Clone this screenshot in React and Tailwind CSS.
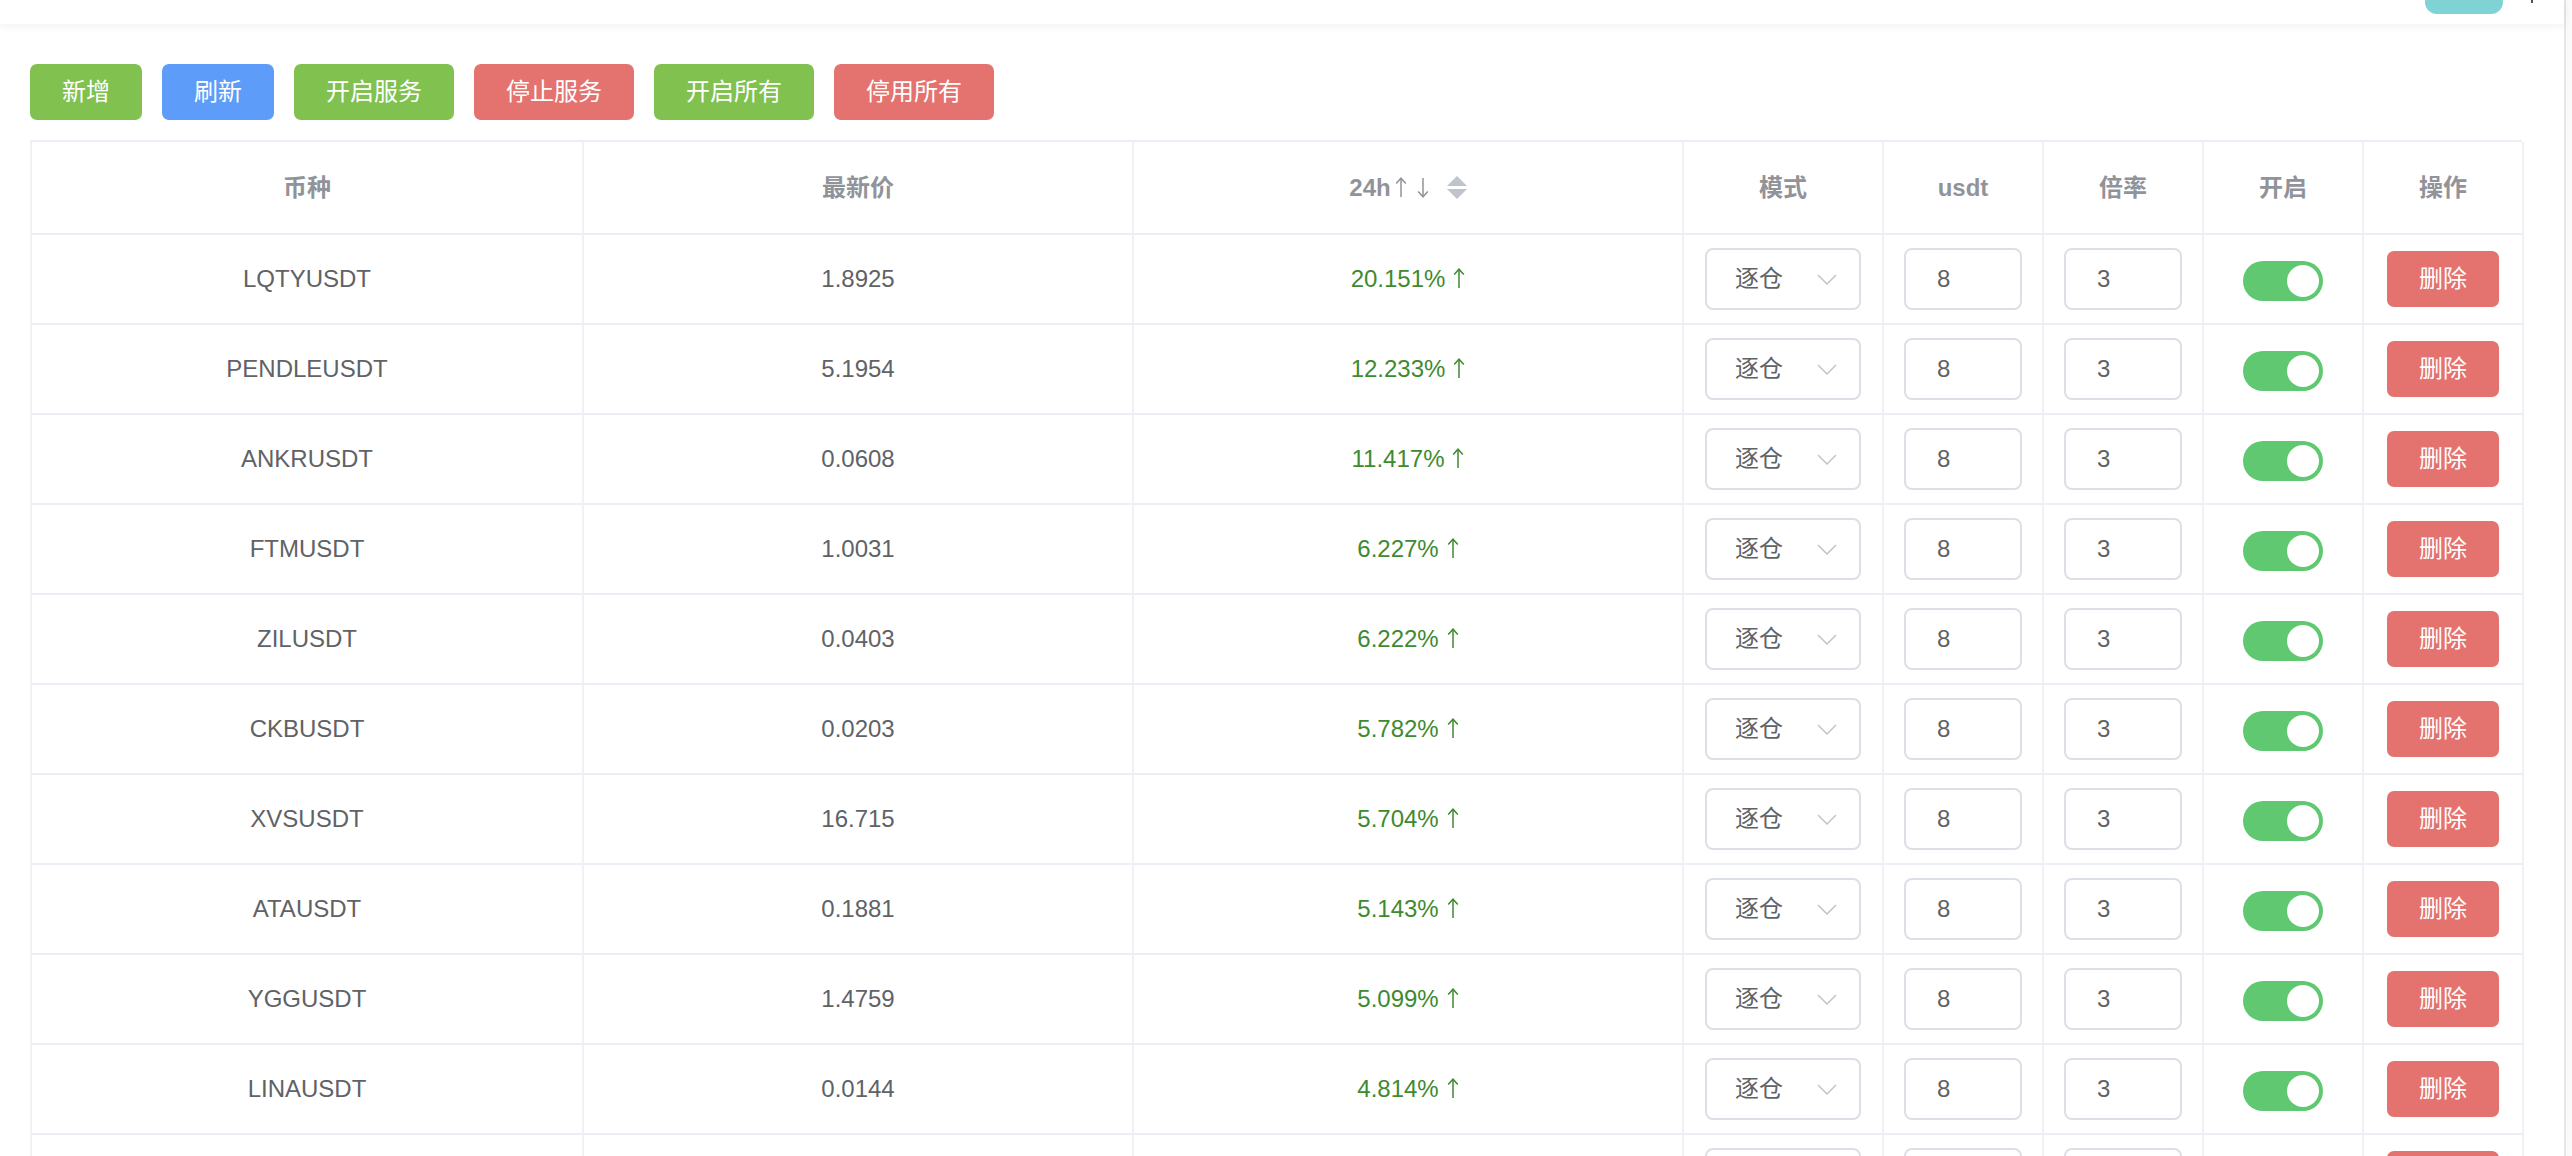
import React from "react";

const rows = [
  ["LQTYUSDT", "1.8925", "20.151%"],
  ["PENDLEUSDT", "5.1954", "12.233%"],
  ["ANKRUSDT", "0.0608", "11.417%"],
  ["FTMUSDT", "1.0031", "6.227%"],
  ["ZILUSDT", "0.0403", "6.222%"],
  ["CKBUSDT", "0.0203", "5.782%"],
  ["XVSUSDT", "16.715", "5.704%"],
  ["ATAUSDT", "0.1881", "5.143%"],
  ["YGGUSDT", "1.4759", "5.099%"],
  ["LINAUSDT", "0.0144", "4.814%"],
];

const actions = [
  { label: "新增", cls: "w-[112px] bg-[#80c150]" },
  { label: "刷新", cls: "w-[112px] bg-[#5d9cf8]" },
  { label: "开启服务", cls: "w-[160px] bg-[#80c150]" },
  { label: "停止服务", cls: "w-[160px] bg-[#e4736f]" },
  { label: "开启所有", cls: "w-[160px] bg-[#80c150]" },
  { label: "停用所有", cls: "w-[160px] bg-[#e4736f]" },
];

function Arrow({ down, className }) {
  return (
    <svg width="12" height="21" viewBox="0 0 12 21" className={className} fill="none" stroke="currentColor" strokeWidth="1.5">
      {down ? (
        <>
          <line x1="6" y1="1" x2="6" y2="19.5" />
          <polyline points="1.2,14.5 6,19.8 10.8,14.5" />
        </>
      ) : (
        <>
          <line x1="6" y1="1.5" x2="6" y2="20" />
          <polyline points="1.2,6.5 6,1.2 10.8,6.5" />
        </>
      )}
    </svg>
  );
}

const grid = "grid grid-cols-[552px_550px_550px_200px_160px_160px_160px_160px]";
const cell = "flex items-center justify-center border-b-2 border-r-2 border-b-[#ebeef5] border-r-[#f0f1f5]";

function HeadCell({ children }) {
  return <div className={`${cell} h-[93px] text-[24px] font-bold text-[#909399]`}>{children}</div>;
}

// one table row; `empty` renders only the controls (last row is cut by the viewport)
function Row({ sym, price, pct, empty }) {
  return (
    <div className={grid}>
      <div className={`${cell} h-[90px] text-[24px] text-[#606266]`}>{sym}</div>
      <div className={`${cell} h-[90px] text-[24px] text-[#606266]`}>{price}</div>
      <div className={`${cell} h-[90px] text-[24px] text-[#3e8a2f]`}>
        {!empty && (
          <>
            <span>{pct}</span>
            <Arrow className="ml-[8px] mb-[2px]" />
          </>
        )}
      </div>
      <div className={`${cell} h-[90px]`}>
        <div className="flex h-[62px] w-[156px] items-center justify-between rounded-[8px] border-2 border-[#dcdfe6] pl-[28px] pr-[22px] text-[24px] text-[#606266]">
          <span>{empty ? "" : "逐仓"}</span>
          <svg width="20" height="11" viewBox="0 0 20 11" fill="none" stroke="#c0c4cc" strokeWidth="1.5">
            <polyline points="1,1 10,10 19,1" />
          </svg>
        </div>
      </div>
      <div className={`${cell} h-[90px]`}>
        <div className="flex h-[62px] w-[118px] items-center rounded-[8px] border-2 border-[#dcdfe6] pl-[31px] text-[24px] text-[#606266]">{empty ? "" : "8"}</div>
      </div>
      <div className={`${cell} h-[90px]`}>
        <div className="flex h-[62px] w-[118px] items-center rounded-[8px] border-2 border-[#dcdfe6] pl-[31px] text-[24px] text-[#606266]">{empty ? "" : "3"}</div>
      </div>
      <div className={`${cell} h-[90px]`}>
        <div className="mt-[4px] flex h-[40px] w-[80px] items-center justify-end rounded-full bg-[#5fc870] pr-[4px]">
          <div className="h-[32px] w-[32px] rounded-full bg-white" />
        </div>
      </div>
      <div className={`${cell} h-[90px]`}>
        <button className="h-[56px] w-[112px] rounded-[7px] bg-[#e4736f] text-[24px] text-white">{empty ? "" : "删除"}</button>
      </div>
    </div>
  );
}

export default function App() {
  const font = { fontFamily: '"Liberation Sans", "Noto Sans CJK SC", sans-serif' };
  return (
    <div className="flex h-[1156px] w-[2572px] overflow-hidden bg-white" style={font}>
      <div className="flex-1">
        <div className="relative h-[24px] bg-white shadow-[0_2px_8px_rgba(0,21,41,0.06)]">
          <div className="absolute right-[61px] top-[-30px] h-[44px] w-[78px] rounded-[12px] bg-[#7fd3d5]" />
          <div className="absolute right-[31px] top-0 h-[3px] w-[2px] bg-[#555]" />
        </div>

        <div className="pl-[30px] pt-[40px]">
          <div className="flex gap-[20px]">
            {actions.map((a) => (
              <button
                key={a.label}
                className={`${a.cls} h-[56px] rounded-[7px] text-[24px] text-white`}
              >
                {a.label}
              </button>
            ))}
          </div>

          <div className="mt-[20px] w-[2492px] border-l-2 border-t-2 border-l-[#f0f1f5] border-t-[#ebeef5]">
            <div className={grid}>
              <HeadCell>币种</HeadCell>
              <HeadCell>最新价</HeadCell>
              <HeadCell>
                <span>24h</span>
                <Arrow className="ml-[4px] text-[#909399]" />
                <Arrow down className="ml-[10px] text-[#909399]" />
                <span className="ml-[18px] flex flex-col gap-[3px]">
                  <svg width="20" height="10" viewBox="0 0 20 10"><polygon points="10,0 20,10 0,10" fill="#c0c4cc" /></svg>
                  <svg width="20" height="10" viewBox="0 0 20 10"><polygon points="0,0 20,0 10,10" fill="#c0c4cc" /></svg>
                </span>
              </HeadCell>
              <HeadCell>模式</HeadCell>
              <HeadCell>usdt</HeadCell>
              <HeadCell>倍率</HeadCell>
              <HeadCell>开启</HeadCell>
              <HeadCell>操作</HeadCell>
            </div>

            {rows.map(([sym, price, pct]) => (
              <Row key={sym} sym={sym} price={price} pct={pct} />
            ))}
            <Row empty />
          </div>
        </div>
      </div>
      <div className="w-[8px] border-l-2 border-[#e6e6e6] bg-[#fafafa]" />
    </div>
  );
}
